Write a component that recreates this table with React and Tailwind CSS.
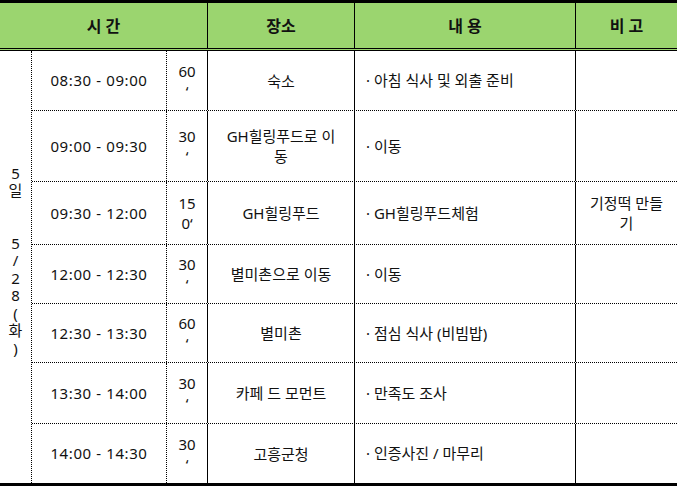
import React from "react";

const rows = [
  { h: "h-[60px]", time: "08:30 - 09:00", min: ["60", "‘"], place: ["숙소"], content: "· 아침 식사 및 외출 준비", note: [] },
  { h: "h-[71px]", time: "09:00 - 09:30", min: ["30", "‘"], place: ["GH힐링푸드로 이", "동"], content: "· 이동", note: [] },
  { h: "h-[63px]", time: "09:30 - 12:00", min: ["15", "0‘"], place: ["GH힐링푸드"], content: "· GH힐링푸드체험", note: ["기정떡 만들", "기"] },
  { h: "h-[59px]", time: "12:00 - 12:30", min: ["30", "‘"], place: ["별미촌으로 이동"], content: "· 이동", note: [] },
  { h: "h-[59px]", time: "12:30 - 13:30", min: ["60", "‘"], place: ["별미촌"], content: "· 점심 식사 (비빔밥)", note: [] },
  { h: "h-[61px]", time: "13:30 - 14:00", min: ["30", "‘"], place: ["카페 드 모먼트"], content: "· 만족도 조사", note: [] },
  { h: "h-[59px]", time: "14:00 - 14:30", min: ["30", "‘"], place: ["고흥군청"], content: "· 인증사진 / 마무리", note: [] },
];

const dateChars = ["5", "일", "", "", "5", "/", "2", "8", "(", "화", ")"];

function Lines({ lines }) {
  return (
    <div className="flex flex-col items-center leading-[20px]">
      {lines.map((l, i) => (
        <span key={i} className="block h-[20px]">{l}</span>
      ))}
    </div>
  );
}

export default function App() {
  return (
    <div
      className="w-[677px] h-[487px] bg-white text-[15px] text-[#111] overflow-hidden"
      style={{ fontFamily: '"Noto Sans", "Noto Sans CJK KR", sans-serif' }}
    >
      <div className="border-t-[3px] border-black">
        <div className="grid grid-cols-[207px_147px_221px_102px] h-[48px] bg-[#9bd56f] border-b-[3px] border-double border-black text-[16px] font-semibold">
          <div className="flex items-center justify-center">시 간</div>
          <div className="flex items-center justify-center border-l border-black">장소</div>
          <div className="flex items-center justify-center border-l border-black">내 용</div>
          <div className="flex items-center justify-center border-l border-black">비 고</div>
        </div>
        <div className="flex border-b-[3px] border-black">
          <div className="w-[32px] shrink-0 border-r border-dotted border-black flex flex-col items-center justify-center pb-[12px]">
            {dateChars.map((c, i) => (
              <span key={i} className="block h-[17.5px] leading-[17.5px] overflow-visible">{c}</span>
            ))}
          </div>
          <div className="flex flex-col flex-1">
            {rows.map((r, i) => (
              <div
                key={i}
                className={`grid grid-cols-[135px_40px_147px_221px_102px] ${r.h} ${i < rows.length - 1 ? "border-b border-dotted border-black" : ""}`}
              >
                <div className="flex items-center justify-center border-r border-dotted border-black tracking-[0.6px]">
                  {r.time}
                </div>
                <div className="flex items-center justify-center">
                  <Lines lines={r.min} />
                </div>
                <div className="flex items-center justify-center border-l border-black">
                  <Lines lines={r.place} />
                </div>
                <div className="flex items-center pl-[11px] border-l border-black">{r.content}</div>
                <div className="flex items-center justify-center border-l border-black">
                  <Lines lines={r.note} />
                </div>
              </div>
            ))}
          </div>
        </div>
      </div>
    </div>
  );
}
